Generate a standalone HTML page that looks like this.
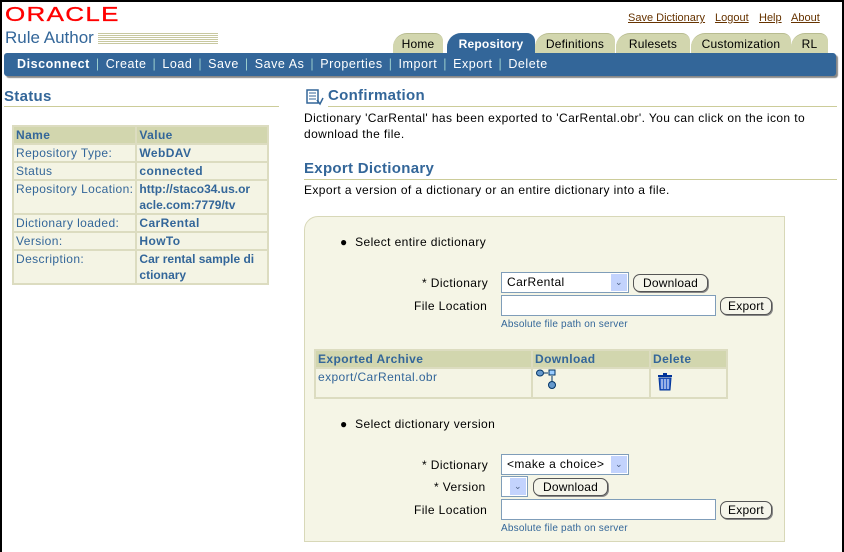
<!DOCTYPE html>
<html><head><meta charset="utf-8"><style>
*{margin:0;padding:0;box-sizing:border-box}
body{width:844px;height:552px;background:#fff;font-family:"Liberation Sans",Arial,sans-serif;font-size:12px;letter-spacing:.4px;color:#000;position:relative;overflow:hidden;border-left:2px solid #000;border-top:2px solid #000;border-right:2px solid #000}
.a{position:absolute;white-space:nowrap}
.h{font-size:15px;font-weight:bold;color:#336699;letter-spacing:.3px}
.ln{position:absolute;height:1px;background:#cccc99}
.tab{position:absolute;top:31px;height:20px;background:#d2d6ae;font-size:12px;text-align:center;line-height:21px;border-top:1px solid #b8bc90;border-radius:14px 8px 0 0;letter-spacing:.2px}
table{border-collapse:collapse}
td{border:2px solid #dcdcc0;padding:0 2px;vertical-align:top;line-height:16px}
.st td{background:#f4f4e4;color:#336699;font-size:12px}
.st td.v{font-weight:bold}
.st tr.hd td{background:#d2d6ae;font-weight:bold}
.sel{position:absolute;height:21px;border:1px solid #7f9db9;background:#fff;font-size:12px;line-height:19px;padding-left:5px}
.sel i{position:absolute;right:1px;top:1px;width:16px;height:17px;background:#c3d3fd;color:#4d6185;font-style:normal;font-size:9px;text-align:center;line-height:17px}
.btn{position:absolute;height:18px;border:1px solid #555;border-radius:7px;background:#f5f5ea;font-size:12px;line-height:16px;text-align:center;box-shadow:1px 1px 0 #888;letter-spacing:.2px}
.inp{position:absolute;height:21px;border:1px solid #7f9db9;background:#fff}
.small{font-size:10px;color:#336699;letter-spacing:.2px}
.nv span{color:#9cc;margin:0 6px}
</style></head><body>
<div class="a" style="left:3px;top:4px;font-size:20px;color:#f00;letter-spacing:1px;transform:scaleX(1.3);transform-origin:left;line-height:18px;-webkit-text-stroke:.3px #f00">ORACLE</div>
<div class="a" style="left:3px;top:26px;font-size:17px;color:#336699;letter-spacing:0">Rule Author</div>
<div class="a" style="left:96px;top:31px;width:120px;height:11px;background:repeating-linear-gradient(#c8c8a0 0 1px,#fff 1px 2px)"></div>
<div class="a" style="left:626px;top:10px;font-size:11px;color:#663300;text-decoration:underline;letter-spacing:0">Save Dictionary</div>
<div class="a" style="left:713px;top:10px;font-size:11px;color:#663300;text-decoration:underline;letter-spacing:0">Logout</div>
<div class="a" style="left:757px;top:10px;font-size:11px;color:#663300;text-decoration:underline;letter-spacing:0">Help</div>
<div class="a" style="left:789px;top:10px;font-size:11px;color:#663300;text-decoration:underline;letter-spacing:0">About</div>
<div class="tab" style="left:391px;width:50px">Home</div>
<div class="tab" style="left:445px;width:88px;background:#336699;color:#fff;font-weight:bold;border-top-color:#336699">Repository</div>
<div class="tab" style="left:533px;width:80px">Definitions</div>
<div class="tab" style="left:614px;width:74px">Rulesets</div>
<div class="tab" style="left:689px;width:100px">Customization</div>
<div class="tab" style="left:789px;width:37px">RL</div>
<div class="a" style="left:2px;top:51px;width:832px;height:23px;background:#336699;box-shadow:2px 2px 1px #888;border-radius:3px"></div>
<div class="a nv" style="left:15px;top:55px;color:#fff;font-size:12.5px;letter-spacing:.55px"><b>Disconnect</b><span>|</span>Create<span>|</span>Load<span>|</span>Save<span>|</span>Save As<span>|</span>Properties<span>|</span>Import<span>|</span>Export<span>|</span>Delete</div>

<div class="a h" style="left:2px;top:86px">Status</div>
<div class="ln" style="left:2px;top:104px;width:275px"></div>
<table class="st a" style="left:10px;top:123px;width:257px">
<tr class="hd"><td style="width:122px">Name</td><td>Value</td></tr>
<tr><td>Repository Type:</td><td class="v">WebDAV</td></tr>
<tr><td>Status</td><td class="v">connected</td></tr>
<tr><td>Repository Location:</td><td class="v" style="letter-spacing:0">http://staco34.us.or<br>acle.com:7779/tv</td></tr>
<tr><td>Dictionary loaded:</td><td class="v">CarRental</td></tr>
<tr><td>Version:</td><td class="v">HowTo</td></tr>
<tr><td>Description:</td><td class="v" style="letter-spacing:0">Car rental sample di<br>ctionary</td></tr>
</table>

<svg class="a" style="left:304px;top:87px" width="18" height="17"><rect x="1" y="1" width="11" height="13" fill="#fff" stroke="#336699" stroke-width="1.5"/><path d="M3 4h7M3 7h7M3 10h7" stroke="#336699"/><path d="M11 11l3 4 3-6" stroke="#336699" stroke-width="1.5" fill="none"/></svg>
<div class="a h" style="left:326px;top:85px">Confirmation</div>
<div class="ln" style="left:326px;top:104px;width:509px"></div>
<div class="a" style="left:302px;top:108px;line-height:16px">Dictionary 'CarRental' has been exported to 'CarRental.obr'. You can click on the icon to<br>download the file.</div>
<div class="a h" style="left:302px;top:158px">Export Dictionary</div>
<div class="ln" style="left:302px;top:177px;width:533px"></div>
<div class="a" style="left:302px;top:181px">Export a version of a dictionary or an entire dictionary into a file.</div>

<div class="a" style="left:302px;top:214px;width:481px;height:326px;background:#f5f5e6;border:1px solid #d8d8b8;border-radius:14px 0 0 0"></div>
<div class="a" style="left:338px;top:233px">●&nbsp; Select entire dictionary</div>
<div class="a" style="left:420px;top:274px">* Dictionary</div>
<div class="sel" style="left:499px;top:270px;width:128px">CarRental<i>⌄</i></div>
<div class="btn" style="left:631px;top:272px;width:75px">Download</div>
<div class="a" style="left:412px;top:297px">File Location</div>
<div class="inp" style="left:499px;top:293px;width:215px"></div>
<div class="btn" style="left:718px;top:295px;width:52px">Export</div>
<div class="a small" style="left:499px;top:317px">Absolute file path on server</div>

<table class="a" style="left:312px;top:347px;width:414px;background:#f4f4e4">
<tr style="background:#d2d6ae;color:#336699;font-weight:bold"><td style="width:217px">Exported Archive</td><td style="width:118px">Download</td><td>Delete</td></tr>
<tr style="height:28px"><td style="color:#336699">export/CarRental.obr</td><td><svg width="26" height="24"><ellipse cx="5" cy="4" rx="3.5" ry="3" fill="#69c" stroke="#036"/><path d="M9 4h4" stroke="#036"/><rect x="14" y="1" width="6" height="5" fill="#9cf" stroke="#036"/><path d="M17 7v5" stroke="#036"/><ellipse cx="17" cy="16" rx="3.5" ry="3.5" fill="#69c" stroke="#036"/></svg></td><td><svg width="18" height="20" style="margin-left:4px;margin-top:3px"><rect x="1" y="3" width="14" height="2" fill="#039"/><rect x="6" y="1" width="4" height="2" fill="#039"/><path d="M2 6h12l-1 12H3z" fill="#36c" stroke="#039"/><path d="M5 7v10M8 7v10M11 7v10" stroke="#fff"/></svg></td></tr>
</table>

<div class="a" style="left:338px;top:415px">●&nbsp; Select dictionary version</div>
<div class="a" style="left:420px;top:456px">* Dictionary</div>
<div class="sel" style="left:499px;top:452px;width:128px">&lt;make a choice&gt;<i>⌄</i></div>
<div class="a" style="left:432px;top:478px">* Version</div>
<div class="sel" style="left:499px;top:474px;width:27px"><i>⌄</i></div>
<div class="btn" style="left:531px;top:476px;width:75px">Download</div>
<div class="a" style="left:412px;top:501px">File Location</div>
<div class="inp" style="left:499px;top:497px;width:215px"></div>
<div class="btn" style="left:718px;top:499px;width:52px">Export</div>
<div class="a small" style="left:499px;top:521px">Absolute file path on server</div>
</body></html>
